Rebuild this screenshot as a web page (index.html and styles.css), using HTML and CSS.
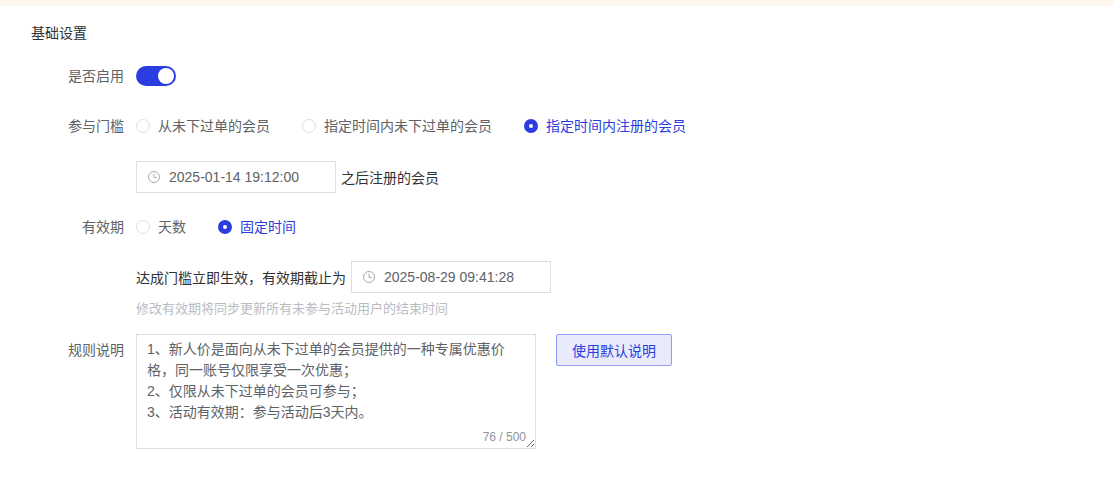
FILE: index.html
```html
<!DOCTYPE html>
<html lang="zh-CN">
<head>
<meta charset="utf-8">
<title>基础设置</title>
<link rel="stylesheet" href="styles.css">
</head>
<body>
<div class="top-strip"></div>
<main class="panel">
  <h2 class="title">基础设置</h2>
  <form class="form">
    <div class="row row-switch">
      <label class="label">是否启用</label>
      <div class="control"><span class="switch"><span class="knob"></span></span></div>
    </div>
    <div class="row row-radio">
      <label class="label">参与门槛</label>
      <div class="control radios">
        <span class="radio"><i class="dot"></i>从未下过单的会员</span>
        <span class="radio"><i class="dot"></i>指定时间内未下过单的会员</span>
        <span class="radio on"><i class="dot"></i>指定时间内注册的会员</span>
      </div>
    </div>
    <div class="row row-date">
      <span class="label"></span>
      <div class="control">
        <span class="date">
          <svg class="clock" viewBox="0 0 14 14"><circle cx="7" cy="7" r="5.5"/><path d="M7 3.6V7.4H10"/></svg>2025-01-14 19:12:00
        </span>
        <span class="after">之后注册的会员</span>
      </div>
    </div>
    <div class="row row-valid">
      <label class="label">有效期</label>
      <div class="control radios">
        <span class="radio"><i class="dot"></i>天数</span>
        <span class="radio on"><i class="dot"></i>固定时间</span>
      </div>
    </div>
    <div class="row row-date2">
      <span class="label"></span>
      <div class="control">
        <span class="before">达成门槛立即生效，有效期截止为</span>
        <span class="date">
          <svg class="clock" viewBox="0 0 14 14"><circle cx="7" cy="7" r="5.5"/><path d="M7 3.6V7.4H10"/></svg>2025-08-29 09:41:28
        </span>
      </div>
    </div>
    <div class="row row-hint">
      <span class="label"></span>
      <div class="hint">修改有效期将同步更新所有未参与活动用户的结束时间</div>
    </div>
    <div class="row row-rule">
      <label class="label">规则说明</label>
      <div class="control top">
        <div class="area">
          <textarea class="textarea" readonly>1、新人价是面向从未下过单的会员提供的一种专属优惠价格，同一账号仅限享受一次优惠；
2、仅限从未下过单的会员可参与；
3、活动有效期：参与活动后3天内。</textarea>
          <span class="count">76 / 500</span>
        </div>
        <button type="button" class="btn">使用默认说明</button>
      </div>
    </div>
  </form>
</main>
</body>
</html>
```
FILE: styles.css
```css
* { box-sizing: border-box; }
html, body { margin: 0; padding: 0; background: #fff; }
body {
  font-family: "Liberation Sans", "Noto Sans CJK SC", sans-serif;
  font-size: 14px;
  color: #606266;
  width: 1114px;
  height: 482px;
  overflow: hidden;
}
.top-strip { height: 6px; background: #fdf6ec; }
.panel { padding: 18px 0 0 31px; }
.title { margin: 0; font-size: 14px; font-weight: 400; line-height: 18px; color: #303133; }
.form { display: flex; flex-direction: column; margin-left: -31px; }
.row { display: flex; align-items: center; }
.label { width: 124px; text-align: right; flex: none; line-height: 20px; }
.control { margin-left: 12px; display: flex; align-items: center; }
.control.top { align-items: flex-start; }
.row-switch { margin-top: 24px; height: 20px; }
.row-radio { margin-top: 30px; height: 20px; }
.row-date { margin-top: 25px; height: 32px; }
.row-valid { margin-top: 24px; height: 20px; }
.row-date2 { margin-top: 24px; height: 32px; }
.row-hint { margin-top: 7px; height: 18px; }
.row-rule { margin-top: 16px; align-items: flex-start; }
.row-rule .label { line-height: 20px; padding-top: 6px; }
.switch { display: block; width: 40px; height: 20px; border-radius: 10px; background: #2b3de0; position: relative; }
.knob { position: absolute; top: 2px; right: 2px; width: 16px; height: 16px; border-radius: 50%; background: #fff; }
.radios { gap: 32px; }
.radio { display: flex; align-items: center; gap: 8px; line-height: 20px; }
.dot { display: block; width: 14px; height: 14px; border-radius: 50%; border: 1px solid #dcdfe6; background: #fff; flex: none; }
.radio.on { color: #2b3de0; }
.radio.on .dot { border: 5px solid #2b3de0; }
.date { display: flex; align-items: center; width: 200px; height: 32px; border: 1px solid #dcdfe6; color: #606266; font-size: 14px; padding-left: 10px; }
.clock { width: 14px; height: 14px; margin-right: 8px; fill: none; stroke: #a8abb2; stroke-width: 1; flex: none; }
.after { margin-left: 5px; color: #303133; }
.before { margin-right: 5px; color: #303133; }
.hint { margin-left: 12px; font-size: 13px; line-height: 18px; color: #b9bcc3; }
.area { position: relative; width: 400px; height: 115px; }
.textarea {
  display: block; width: 400px; height: 115px;
  border: 1px solid #dcdfe6; border-radius: 0; outline: none;
  padding: 4px 10px; margin: 0;
  font: inherit; line-height: 21px; color: #606266;
  resize: both; background: #fff;
}
.count { position: absolute; right: 10px; bottom: 5px; font-size: 12px; line-height: 14px; color: #909399; }
.btn {
  margin: 0 0 0 20px; width: 116px; height: 32px;
  border: 1px solid #959cf0; border-radius: 2px; background: #e9ebfd;
  color: #2b3de0; font: inherit; padding: 0;
}
```
